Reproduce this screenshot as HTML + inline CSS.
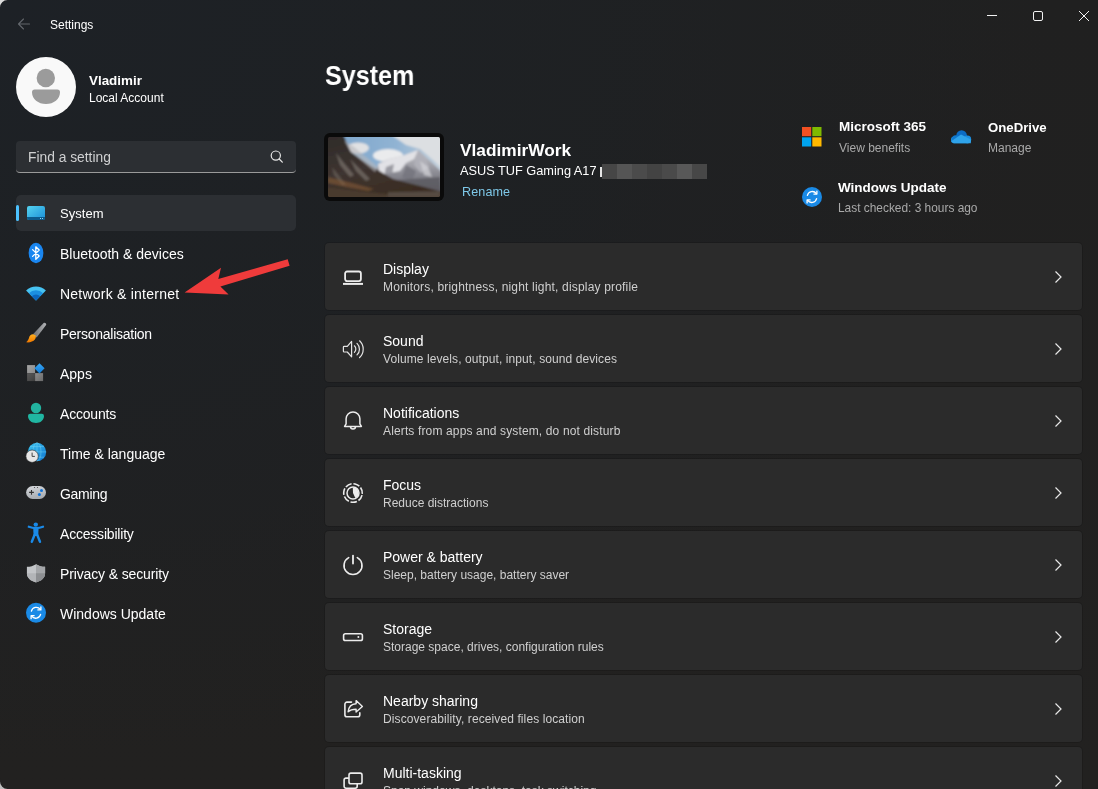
<!DOCTYPE html>
<html><head><meta charset="utf-8">
<style>
*{margin:0;padding:0;box-sizing:border-box}
html,body{width:1098px;height:789px;overflow:hidden;background:#202020}
body{font-family:"Liberation Sans",sans-serif;color:#fff;position:relative}
#bg{position:absolute;left:0;top:0;width:1098px;height:789px;
 background:
  radial-gradient(ellipse 1050px 760px at 0px 0px, rgba(29,33,38,1) 0%, rgba(30,33,36,0.85) 50%, rgba(32,32,32,0) 100%),
  linear-gradient(#202020,#222120);
 border-radius:8px}
.t{position:absolute;white-space:nowrap;line-height:1;will-change:transform}
.s12{font-size:12px}
.s14{font-size:14px}
.b{font-weight:700}
.nav{position:absolute;left:60px;font-size:14px;color:#fff;line-height:1;white-space:nowrap;will-change:transform}
.card{position:absolute;left:325px;width:757px;height:67px;background:#2b2b2b;border-radius:4px;box-shadow:0 0 0 1px rgba(0,0,0,0.13)}
.card .ti{will-change:transform;position:absolute;left:58px;top:19.2px;font-size:14px;line-height:1;white-space:nowrap;color:#fff}
.card .su{will-change:transform;position:absolute;left:58px;top:38px;font-size:12px;line-height:1;white-space:nowrap;color:#cfcfcf}
.card svg.ic{position:absolute;left:16px;top:22px}
.card svg.ch{position:absolute;left:728px;top:27px}
svg{position:absolute;overflow:visible}
</style></head><body>
<div id="bg"></div>

<!-- title bar -->
<svg style="left:0;top:0" width="1098" height="40">
 <path d="M29.5 24H18.5M23.5 19L18.5 24L23.5 29" stroke="#62666b" stroke-width="1.1" fill="none" stroke-linecap="round" stroke-linejoin="round"/>
 <path d="M987 15.5H997" stroke="#f2f2f2" stroke-width="1"/>
 <rect x="1033.5" y="11.5" width="9" height="9" rx="1.5" stroke="#f2f2f2" stroke-width="1" fill="none"/>
 <path d="M1079 11L1089 21M1089 11L1079 21" stroke="#f2f2f2" stroke-width="1"/>
</svg>
<div class="t s12" style="left:50px;top:19px;color:#fff">Settings</div>

<!-- user -->
<svg style="left:0;top:0" width="300" height="130">
 <circle cx="46" cy="87" r="30" fill="#f9f9f9"/>
 <circle cx="45.8" cy="78" r="9.2" fill="#9b9b9b"/>
 <path d="M32 92.2a2.7 2.7 0 0 1 2.7-2.7h22.6a2.7 2.7 0 0 1 2.7 2.7c0 6.8-6.2 11.8-14 11.8s-14-5-14-11.8z" fill="#9b9b9b"/>
</svg>
<div class="t b" style="left:88.5px;top:74.2px;font-size:13.4px">Vladimir</div>
<div class="t s12" style="left:88.5px;top:91.8px">Local Account</div>

<!-- search -->
<div style="position:absolute;left:16px;top:141px;width:280px;height:32px;background:#2c2f33;border-radius:4px;border-bottom:1px solid #9a9a9a"></div>
<div class="t" style="left:27.5px;top:151.3px;font-size:13.8px;color:#cfd0d1">Find a setting</div>
<svg style="left:0;top:0" width="300" height="200">
 <circle cx="275.8" cy="155.6" r="4.6" stroke="#e6e6e6" stroke-width="1.2" fill="none"/>
 <path d="M279.2 159L282.3 162.1" stroke="#e6e6e6" stroke-width="1.3" stroke-linecap="round"/>
</svg>

<!-- nav selected -->
<div style="position:absolute;left:16px;top:195px;width:280px;height:36px;background:#2c2f33;border-radius:5px"></div>
<div style="position:absolute;left:16px;top:205px;width:3px;height:16px;background:#4cc2ff;border-radius:2px"></div>

<div class="nav" style="top:207.3px;font-size:13px;letter-spacing:0.05px">System</div>
<div class="nav" style="top:247.3px">Bluetooth &amp; devices</div>
<div class="nav" style="top:287.3px;letter-spacing:0.23px">Network &amp; internet</div>
<div class="nav" style="top:327.3px;letter-spacing:-0.26px">Personalisation</div>
<div class="nav" style="top:367.3px">Apps</div>
<div class="nav" style="top:407.3px;letter-spacing:-0.2px">Accounts</div>
<div class="nav" style="top:447.3px">Time &amp; language</div>
<div class="nav" style="top:487.3px;letter-spacing:-0.3px">Gaming</div>
<div class="nav" style="top:527.3px;letter-spacing:-0.2px">Accessibility</div>
<div class="nav" style="top:567.3px;letter-spacing:-0.13px">Privacy &amp; security</div>
<div class="nav" style="top:607.3px">Windows Update</div>

<!-- nav icons -->
<svg style="left:0;top:0" width="60" height="640">
 <defs>
  <linearGradient id="gsys" x1="0" y1="0" x2="1" y2="1"><stop offset="0" stop-color="#55d3f0"/><stop offset="1" stop-color="#1a8ed8"/></linearGradient>
  <linearGradient id="gglobe" x1="0" y1="0" x2="1" y2="1"><stop offset="0" stop-color="#3cc4ef"/><stop offset="1" stop-color="#0f75cf"/></linearGradient>
  <linearGradient id="gpad" x1="0" y1="0" x2="0.3" y2="1"><stop offset="0" stop-color="#d6d9dd"/><stop offset="1" stop-color="#a9adb2"/></linearGradient>
  <linearGradient id="gbrush" x1="0" y1="0" x2="1" y2="0"><stop offset="0" stop-color="#6d6f72"/><stop offset="1" stop-color="#b0b2b5"/></linearGradient>
  <linearGradient id="gorange" x1="0" y1="0" x2="0" y2="1"><stop offset="0" stop-color="#ffb020"/><stop offset="1" stop-color="#f07800"/></linearGradient>
 </defs>
 <!-- system -->
 <rect x="27" y="206" width="18" height="14" rx="2" fill="url(#gsys)"/>
 <path d="M27 217h18v1a2 2 0 0 1-2 2h-14a2 2 0 0 1-2-2z" fill="#0c5a8c"/>
 <rect x="40" y="218" width="1" height="1" fill="#8fd6f5"/><rect x="42" y="218" width="1" height="1" fill="#8fd6f5"/>
 <!-- bluetooth -->
 <ellipse cx="36" cy="253" rx="7.4" ry="10.2" fill="#1a86f0"/>
 <path d="M32.6 249.6L39.2 256L35.8 259.2V246.8L39.2 250L32.6 256.4" stroke="#fff" stroke-width="1.3" fill="none" stroke-linejoin="round" stroke-linecap="round"/>
 <!-- wifi -->
 <path d="M36 300.4L26.1 290.5A14 14 0 0 1 45.9 290.5Z" fill="#47c3f2"/>
 <path d="M36 300.4L28.9 293.3A10 10 0 0 1 43.1 293.3Z" fill="#1b8fe0"/>
 <path d="M36 300.4L31.8 296.2A6 6 0 0 1 40.2 296.2Z" fill="#0c66bd"/>
 <!-- brush -->
 <path d="M43.6 323c1.2-0.9 3.2 0.6 2.5 2L36.6 337.4L32.8 334.6Z" fill="url(#gbrush)"/>
 <path d="M32.9 334.3c-2 0.1-3.4 1.5-3.8 3.2c-0.4 1.7-1.3 3.6-3 4.8c3.5 0.5 7-0.5 8.8-2.7c1.2-1.5 1.2-3.4 0.6-4.3z" fill="url(#gorange)"/>
 <!-- apps -->
 <defs>
  <linearGradient id="gq1" x1="0" y1="0" x2="1" y2="1"><stop offset="0" stop-color="#a6a6a6"/><stop offset="1" stop-color="#8a8a8a"/></linearGradient>
  <linearGradient id="gq2" x1="0" y1="0" x2="1" y2="1"><stop offset="0" stop-color="#5a5a5a"/><stop offset="1" stop-color="#3e3e3e"/></linearGradient>
  <linearGradient id="gq3" x1="0" y1="0" x2="1" y2="1"><stop offset="0" stop-color="#8e8e8e"/><stop offset="1" stop-color="#6a6a6a"/></linearGradient>
  <linearGradient id="gdia" x1="0" y1="0" x2="0" y2="1"><stop offset="0" stop-color="#3aa8f5"/><stop offset="1" stop-color="#0f7ad8"/></linearGradient>
 </defs>
 <rect x="27.1" y="365.1" width="8" height="8" fill="url(#gq1)"/>
 <rect x="27.1" y="373.1" width="8" height="8" fill="url(#gq2)"/>
 <rect x="35.1" y="373.1" width="8" height="8" fill="url(#gq3)"/>
 <path d="M39.5 363.2L44.6 368.3L39.5 373.4L34.4 368.3Z" fill="url(#gdia)"/>
 <!-- accounts -->
 <circle cx="36" cy="408" r="5.2" fill="#22b3a0"/>
 <path d="M28 416a2.2 2.2 0 0 1 2.2-2.2h11.6a2.2 2.2 0 0 1 2.2 2.2c0 4.2-3.6 7-8 7s-8-2.8-8-7z" fill="#20b6a2"/>
 <!-- time -->
 <circle cx="37" cy="451.9" r="9.2" fill="url(#gglobe)"/>
 <path d="M27.8 451.9H46.2M37 442.7V461.1M30 446.6H44M30 457.2H44" stroke="#7fd8f5" stroke-width="0.6" opacity="0.7"/>
 <ellipse cx="37" cy="451.9" rx="4" ry="9.2" stroke="#7fd8f5" stroke-width="0.6" fill="none" opacity="0.7"/>
 <circle cx="32.1" cy="456.2" r="6.2" fill="#e6e6e6" stroke="#202124" stroke-width="0.6"/>
 <path d="M32.1 452.6V456.4H34.9" stroke="#444" stroke-width="1" fill="none"/>
 <!-- gaming -->
 <rect x="26.1" y="486" width="19.9" height="13" rx="6.5" fill="url(#gpad)"/>
 <path d="M29.1 492.4h4.8M31.5 490v4.8" stroke="#333" stroke-width="1.1"/>
 <circle cx="41.5" cy="490.5" r="1.5" fill="#1173d8"/>
 <circle cx="39.4" cy="494.6" r="1.5" fill="#1173d8"/>
 <circle cx="34.5" cy="487.5" r="0.6" fill="#444"/><circle cx="37.5" cy="487.5" r="0.6" fill="#444"/>
 <!-- accessibility -->
 <circle cx="35.8" cy="524.6" r="2.2" fill="#1a8ae8"/>
 <path d="M28.8 526.8Q36 529.6 43 526.8" stroke="#1a8ae8" stroke-width="2.3" fill="none" stroke-linecap="round"/>
 <path d="M33.2 528.2H38.6L38.2 536H33.6Z" fill="#1a8ae8"/>
 <path d="M34.5 535L31.8 541.8M37.3 535L40 541.8" stroke="#1a8ae8" stroke-width="2.4" fill="none" stroke-linecap="round"/>
 <!-- privacy -->
 <path d="M36 564.2c2.6 1.7 5.8 2.6 9.1 2.6v6.2c0 4.6-3.4 7.8-9.1 9.2c-5.7-1.4-9.1-4.6-9.1-9.2v-6.2c3.3 0 6.5-0.9 9.1-2.6z" fill="#c3c5c8"/>
 <path d="M36 564.2c2.6 1.7 5.8 2.6 9.1 2.6v6.2c0 4.6-3.4 7.8-9.1 9.2z" fill="#a4a6a9"/>
 <path d="M36 573.2h9.1c0 4.6-3.4 7.8-9.1 9.2z" fill="#8d8f92"/>
 <path d="M26.9 573.2h9.1v9.2c-5.7-1.4-9.1-4.6-9.1-9.2z" fill="#b3b5b8"/>
 <!-- windows update -->
 <circle cx="36" cy="612.8" r="10" fill="#1a8ae6"/>
 <path d="M31.4 611.2a5 5 0 0 1 8.9-1.8M40.6 614.4a5 5 0 0 1-8.9 1.8" stroke="#fff" stroke-width="1.3" fill="none" stroke-linecap="round"/>
 <path d="M40.9 606.9V609.9H37.9M31.1 618.7V615.7H34.1" stroke="#fff" stroke-width="1.3" fill="none" stroke-linecap="round" stroke-linejoin="round"/>
</svg>

<!-- annotation arrow -->
<svg style="left:0;top:0" width="300" height="320">
 <path d="M184.6 292.4L221 267.8L218.3 279L287.7 259.3L289.6 265.8L220.4 286.6L228.6 294.6Z" fill="#ef3b3b"/>
</svg>

<!-- header -->
<div class="t b" style="left:324.6px;top:61.9px;font-size:27.4px;transform:scaleX(0.918);transform-origin:0 0">System</div>

<div style="position:absolute;left:324px;top:133px;width:120px;height:68px;background:#0a0a0a;border-radius:6px"></div>
<svg style="left:328px;top:137px" width="112" height="60" viewBox="0 0 112 60">
 <defs>
  <linearGradient id="sky" x1="0" y1="0" x2="1" y2="0"><stop offset="0" stop-color="#7aa3ca"/><stop offset="0.6" stop-color="#90b3d3"/><stop offset="1" stop-color="#c9d3dc"/></linearGradient>
  <linearGradient id="snowg" x1="0" y1="0" x2="0" y2="1"><stop offset="0" stop-color="#c8c8ce"/><stop offset="0.45" stop-color="#8e8e96"/><stop offset="1" stop-color="#505058"/></linearGradient>
  <linearGradient id="rockg" x1="0" y1="0" x2="0.5" y2="1"><stop offset="0" stop-color="#2e2b2a"/><stop offset="0.55" stop-color="#3e3430"/><stop offset="1" stop-color="#3a2c22"/></linearGradient>
  <filter id="bl" x="-10%" y="-10%" width="120%" height="120%"><feGaussianBlur stdDeviation="0.8"/></filter>
  <clipPath id="clip"><rect width="112" height="60" rx="1.5"/></clipPath>
 </defs>
 <g clip-path="url(#clip)">
 <g filter="url(#bl)">
 <rect x="-5" y="-5" width="122" height="70" fill="url(#sky)"/>
 <path d="M62 -3H115V32L104 22L92 12L78 8Z" fill="#dcdfe2"/>
 <ellipse cx="60" cy="18.5" rx="15" ry="6.5" fill="#eaebed"/>
 <ellipse cx="30" cy="11" rx="11" ry="5.5" fill="#e0e1e3"/>
 <path d="M36 62L51 26L61 22L74 19L90 13L100 22L115 36V62Z" fill="url(#snowg)"/>
 <path d="M50 27L61 22L74 19L90 13L86 22L78 26L72 34L62 36L52 38Z" fill="#e2e2e6"/>
 <path d="M90 13L97 20L101 30L93 36L86 28Z" fill="#b0b0b8"/>
 <path d="M58 30L66 27L64 38L56 40Z" fill="#8a8a92" opacity="0.8"/>
 <path d="M78 28L88 34L84 44L74 40Z" fill="#76767e" opacity="0.9"/>
 <path d="M92 24L100 30L104 40L96 38Z" fill="#d6d6da" opacity="0.7"/>
 <path d="M55 44L112 40V60H55Z" fill="#5c5a62" opacity="0.85"/>
 <path d="M-3 -3H15L23 15L43 29L65 42L115 55V62H-3Z" fill="url(#rockg)"/>
 <path d="M16 3L26 10L38 20L50 30L47 35L34 24L22 14Z" fill="#b8b8ba" opacity="0.6"/>
 <path d="M8 16L16 26L26 38L22 40L12 28Z" fill="#8a847e" opacity="0.55"/>
 <path d="M22 22L32 32L42 42L38 44L28 34Z" fill="#9a948e" opacity="0.45"/>
 <path d="M4 30L12 40L18 48L14 48L6 38Z" fill="#7a726a" opacity="0.5"/>
 <path d="M0 40L24 46L46 52L40 54L18 50L0 46Z" fill="#8a5e36" opacity="0.55"/>
 <path d="M-3 50L30 54L60 57L115 56V62H-3Z" fill="#4a3a2e"/>
 <path d="M60 55L112 54V60H60Z" fill="#5a5048" opacity="0.8"/>
 </g>
 </g>
</svg>
<div class="t b" style="left:460.3px;top:141.8px;font-size:17.3px">VladimirWork</div>
<div class="t" style="left:460.4px;top:165.4px;font-size:12.78px;letter-spacing:-0.01px">ASUS TUF Gaming A17</div>
<div style="position:absolute;left:600.2px;top:166.9px;width:1.8px;height:9.9px;background:#e6e6e6"></div>
<svg style="left:602px;top:164px" width="105" height="15">
 <rect x="0" width="15" height="15" fill="#464646"/>
 <rect x="15" width="15" height="15" fill="#555555"/>
 <rect x="30" width="15" height="15" fill="#4b4b4b"/>
 <rect x="45" width="15" height="15" fill="#434343"/>
 <rect x="60" width="15" height="15" fill="#4a4a4a"/>
 <rect x="75" width="15" height="15" fill="#585858"/>
 <rect x="90" width="15" height="15" fill="#474747"/>
</svg>
<div class="t" style="left:461.5px;top:185.7px;color:#7ec8e8;font-size:12.6px;letter-spacing:0.1px">Rename</div>

<!-- quick links -->
<svg style="left:0;top:0" width="1098" height="230">
 <rect x="802" y="127" width="9.2" height="9.2" fill="#f25022"/>
 <rect x="812.3" y="127" width="9.2" height="9.2" fill="#7fba00"/>
 <rect x="802" y="137.3" width="9.2" height="9.2" fill="#00a4ef"/>
 <rect x="812.3" y="137.3" width="9.2" height="9.2" fill="#ffb900"/>
 <!-- onedrive -->
 <g>
 <rect x="951" y="136.6" width="20" height="6.6" rx="3.2" fill="#1a8ee0"/>
 <circle cx="961.6" cy="135.6" r="5.3" fill="#0c6cc4"/>
 <circle cx="955.6" cy="138.8" r="3.5" fill="#1078cc"/>
 <circle cx="967.4" cy="139.4" r="3.8" fill="#1a8ee0"/>
 <path d="M951.2 141.2L961 134.6L970.8 139.6V143.2H953.4Z" fill="#2fa3ea"/>
 </g>
 <!-- wu -->
 <circle cx="812" cy="197" r="10" fill="#1a8ae6"/>
 <path d="M807.4 195.4a5 5 0 0 1 8.9-1.8M816.6 198.6a5 5 0 0 1-8.9 1.8" stroke="#fff" stroke-width="1.3" fill="none" stroke-linecap="round"/>
 <path d="M816.9 191.1V194.1H813.9M807.1 202.9V199.9H810.1" stroke="#fff" stroke-width="1.3" fill="none" stroke-linecap="round" stroke-linejoin="round"/>
</svg>
<div class="t b" style="left:839px;top:120px;font-size:13.5px">Microsoft 365</div>
<div class="t s12" style="left:839px;top:141.5px;color:#a9a9a9">View benefits</div>
<div class="t b" style="left:987.5px;top:120.6px;font-size:13.2px">OneDrive</div>
<div class="t s12" style="left:987.5px;top:141.5px;color:#a9a9a9">Manage</div>
<div class="t b" style="left:838.3px;top:180.5px;font-size:13.5px">Windows Update</div>
<div class="t s12" style="left:838.3px;top:203.1px;color:#a9a9a9;font-size:11.9px">Last checked: 3 hours ago</div>

<!-- cards -->
<div class="card" style="top:243px">
 <svg class="ic" width="24" height="24" viewBox="0 0 24 24" style="left:16px;top:24px">
  <rect x="4.1" y="4.5" width="15.8" height="9.6" rx="2" stroke="#ececec" stroke-width="1.8" fill="none"/>
  <path d="M2 16.9H22" stroke="#ececec" stroke-width="2"/>
 </svg>
 <div class="ti">Display</div>
 <div class="su" style="letter-spacing:0.18px">Monitors, brightness, night light, display profile</div>
 <svg class="ch" width="10" height="14"><path d="M2.5 1.5L8 7L2.5 12.5" stroke="#e8e8e8" stroke-width="1.2" fill="none"/></svg>
</div>

<div class="card" style="top:315px">
 <svg class="ic" width="24" height="24" viewBox="0 0 24 24" style="left:16px;top:24px">
  <path d="M3.2 7.3H6.3L10.6 2.4V17.8L6.3 13H3.2a0.8 0.8 0 0 1-0.8-0.8V8.1a0.8 0.8 0 0 1 0.8-0.8z" stroke="#e4e4e4" stroke-width="1.2" fill="none" stroke-linejoin="round"/>
  <path d="M13.4 6.8a4.5 4.5 0 0 1 0 6.6M16 4.4a8 8 0 0 1 0 11.5M18.6 1.8a11.5 11.5 0 0 1 0 16.7" stroke="#e4e4e4" stroke-width="1.2" fill="none" stroke-linecap="round"/>
 </svg>
 <div class="ti">Sound</div>
 <div class="su" style="letter-spacing:0.09px">Volume levels, output, input, sound devices</div>
 <svg class="ch" width="10" height="14"><path d="M2.5 1.5L8 7L2.5 12.5" stroke="#e8e8e8" stroke-width="1.2" fill="none"/></svg>
</div>

<div class="card" style="top:387px">
 <svg class="ic" width="24" height="24" viewBox="0 0 24 24" style="left:16px;top:24px">
  <path d="M5.1 7.8A6.9 6.9 0 0 1 18.9 7.8V12.8L20.4 15.4H3.6L5.1 12.8Z" stroke="#ececec" stroke-width="1.5" fill="none" stroke-linejoin="round"/>
  <path d="M9.5 15.6A2.5 2.5 0 0 0 14.5 15.6" stroke="#ececec" stroke-width="1.5" fill="none"/>
 </svg>
 <div class="ti">Notifications</div>
 <div class="su" style="letter-spacing:0.14px">Alerts from apps and system, do not disturb</div>
 <svg class="ch" width="10" height="14"><path d="M2.5 1.5L8 7L2.5 12.5" stroke="#e8e8e8" stroke-width="1.2" fill="none"/></svg>
</div>

<div class="card" style="top:459px">
 <svg class="ic" width="24" height="24" viewBox="0 0 24 24" style="left:16px;top:24px">
  <circle cx="12" cy="10" r="9.3" stroke="#ececec" stroke-width="1.6" fill="none" stroke-dasharray="6.55 1.8" transform="rotate(13.4 12 10)"/>
  <circle cx="12" cy="10" r="6" stroke="#ececec" stroke-width="1.5" fill="none"/>
  <path d="M12 10L11.8 4.4A5.6 5.6 0 0 1 14.3 15.1Z" fill="#ececec"/>
 </svg>
 <div class="ti">Focus</div>
 <div class="su">Reduce distractions</div>
 <svg class="ch" width="10" height="14"><path d="M2.5 1.5L8 7L2.5 12.5" stroke="#e8e8e8" stroke-width="1.2" fill="none"/></svg>
</div>

<div class="card" style="top:531px">
 <svg class="ic" width="24" height="24" viewBox="0 0 24 24" style="left:16px;top:24px">
  <path d="M7.7 2.6A9 9 0 1 0 16.3 2.6" stroke="#ececec" stroke-width="1.6" fill="none" stroke-linecap="round"/>
  <path d="M12 0.6V8.6" stroke="#ececec" stroke-width="1.8" stroke-linecap="round"/>
 </svg>
 <div class="ti">Power &amp; battery</div>
 <div class="su">Sleep, battery usage, battery saver</div>
 <svg class="ch" width="10" height="14"><path d="M2.5 1.5L8 7L2.5 12.5" stroke="#e8e8e8" stroke-width="1.2" fill="none"/></svg>
</div>

<div class="card" style="top:603px">
 <svg class="ic" width="24" height="24" viewBox="0 0 24 24" style="left:16px;top:24px">
  <rect x="2.6" y="6.7" width="18.8" height="6.8" rx="1.8" stroke="#ececec" stroke-width="1.6" fill="none"/>
  <circle cx="17.4" cy="10.1" r="1" fill="#ececec"/>
 </svg>
 <div class="ti">Storage</div>
 <div class="su">Storage space, drives, configuration rules</div>
 <svg class="ch" width="10" height="14"><path d="M2.5 1.5L8 7L2.5 12.5" stroke="#e8e8e8" stroke-width="1.2" fill="none"/></svg>
</div>

<div class="card" style="top:675px">
 <svg class="ic" width="24" height="24" viewBox="0 0 24 24" style="left:16px;top:24px">
  <path d="M10.5 3.1H6a2.1 2.1 0 0 0-2.1 2.1V15.7a2.1 2.1 0 0 0 2.1 2.1H16.7a2.1 2.1 0 0 0 2.1-2.1V13.8" stroke="#ececec" stroke-width="1.6" fill="none" stroke-linecap="round"/>
  <path d="M7.1 12.8C7.6 8 10.6 4.9 15.1 4.7V1.6L21.4 7.5L15.1 13.1V10.2C11.6 10.2 9 11 7.1 12.8Z" stroke="#ececec" stroke-width="1.4" fill="none" stroke-linejoin="round"/>
 </svg>
 <div class="ti">Nearby sharing</div>
 <div class="su" style="letter-spacing:0.1px">Discoverability, received files location</div>
 <svg class="ch" width="10" height="14"><path d="M2.5 1.5L8 7L2.5 12.5" stroke="#e8e8e8" stroke-width="1.2" fill="none"/></svg>
</div>

<div class="card" style="top:747px">
 <svg class="ic" width="24" height="24" viewBox="0 0 24 24" style="left:16px;top:24px">
  <rect x="8" y="2.1" width="13" height="10.7" rx="1.9" stroke="#ececec" stroke-width="1.6" fill="none"/>
  <path d="M8 7.1H5a1.9 1.9 0 0 0-1.9 1.9V15.3a1.9 1.9 0 0 0 1.9 1.9H14.3a1.9 1.9 0 0 0 1.9-1.9V12.8" stroke="#ececec" stroke-width="1.6" fill="none"/>
 </svg>
 <div class="ti">Multi-tasking</div>
 <div class="su">Snap windows, desktops, task switching</div>
 <svg class="ch" width="10" height="14"><path d="M2.5 1.5L8 7L2.5 12.5" stroke="#e8e8e8" stroke-width="1.2" fill="none"/></svg>
</div>

<!-- window corner outside -->
<svg style="left:0;top:0" width="1098" height="789">
 <path d="M0 0H7.5A7.5 7.5 0 0 0 0 7.5Z" fill="#dcdcdc"/>
 <path d="M0 789H7.5A7.5 7.5 0 0 1 0 781.5Z" fill="#bdbdbd"/>
</svg>
</body></html>
